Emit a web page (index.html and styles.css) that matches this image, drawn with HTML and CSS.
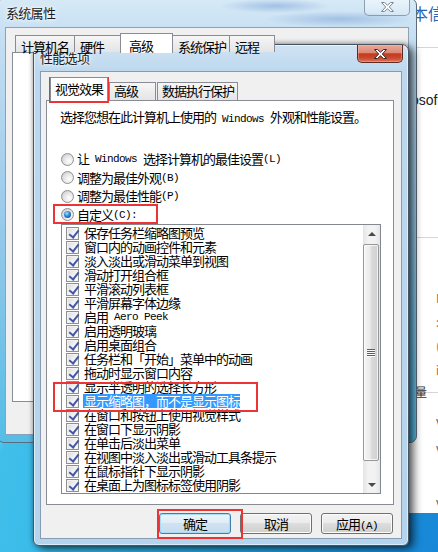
FILE: index.html
```html
<!DOCTYPE html>
<html lang="zh-CN">
<head>
  <meta charset="UTF-8" />
  <meta name="viewport" content="width=device-width, initial-scale=1.0"/>
  <title>性能选项</title>
  <link rel="stylesheet" href="styles.css">
</head>
<body>

<div class="desktop">

  <div class="page">
    <span class="page-head">本信</span>
    <div class="page-rule"></div>
    <span class="page-word">osof</span>
    <div class="page-rule rule-2"></div>
    <span class="page-bits">I<br>:<br>(<br>i</span>
    <div class="page-rule rule-3"><span>量</span></div>
    <span class="page-bits bits-2">v<br>v<br><br>v</span>
  </div>

  <div class="window back">
    <div class="titlebar back-bar">
      <span class="caption">系统属性</span>
      <span class="close close-off">
        <svg width="13" height="10" viewBox="0 0 13 10"><polygon points="0.5,0.5 3.5,0.5 6.5,3.2 9.5,0.5 12.5,0.5 8.3,5 12.5,9.5 9.5,9.5 6.5,6.8 3.5,9.5 0.5,9.5 4.7,5" fill="#fbfbfb" stroke="#7d8895" stroke-width="1"/></svg>
      </span>
    </div>
    <div class="client back-client">
      <div class="back-tabs">
        <span class="btab b1">计算机名</span>
        <span class="btab b2">硬件</span>
        <span class="btab b3 on">高级</span>
        <span class="btab b4">系统保护</span>
        <span class="btab b5">远程</span>
      </div>
      <div class="back-panel"></div>
    </div>
  </div>

  <div class="window dialog">
    <div class="titlebar dialog-bar">
      <span class="caption">性能选项</span>
      <span class="close close-red">
        <svg width="13" height="10" viewBox="0 0 13 10"><polygon points="0.5,0.5 3.5,0.5 6.5,3.2 9.5,0.5 12.5,0.5 8.3,5 12.5,9.5 9.5,9.5 6.5,6.8 3.5,9.5 0.5,9.5 4.7,5" fill="#ffffff" stroke="#3a2a2a" stroke-width="1"/></svg>
      </span>
    </div>

    <div class="client">
      <div class="tabs">
        <span class="tab active">视觉效果</span>
        <span class="tab t2">高级</span>
        <span class="tab t3">数据执行保护</span>
      </div>

      <div class="panel">
        <p class="desc">选择您想在此计算机上使用的<span class="en"> Windows </span>外观和性能设置。</p>

        <div class="options">
          <div class="opt"><span class="radio"></span>让<span class="en"> Windows </span>选择计算机的最佳设置<span class="en">(L)</span></div>
          <div class="opt"><span class="radio"></span>调整为最佳外观<span class="en">(B)</span></div>
          <div class="opt"><span class="radio"></span>调整为最佳性能<span class="en">(P)</span></div>
          <div class="opt"><span class="radio on"></span>自定义<span class="en">(C):</span></div>
        </div>

        <div class="listbox">
          <div class="items">
            <div class="item"><span class="check"></span>保存任务栏缩略图预览</div>
            <div class="item"><span class="check"></span>窗口内的动画控件和元素</div>
            <div class="item"><span class="check"></span>淡入淡出或滑动菜单到视图</div>
            <div class="item"><span class="check"></span>滑动打开组合框</div>
            <div class="item"><span class="check"></span>平滑滚动列表框</div>
            <div class="item"><span class="check"></span>平滑屏幕字体边缘</div>
            <div class="item"><span class="check"></span>启用<span class="en"> Aero Peek</span></div>
            <div class="item"><span class="check"></span>启用透明玻璃</div>
            <div class="item"><span class="check"></span>启用桌面组合</div>
            <div class="item"><span class="check"></span>任务栏和「开始」菜单中的动画</div>
            <div class="item"><span class="check"></span>拖动时显示窗口内容</div>
            <div class="item"><span class="check"></span>显示半透明的选择长方形</div>
            <div class="item"><span class="check"></span><span class="sel">显示缩略图，而不是显示图标</span></div>
            <div class="item"><span class="check"></span>在窗口和按钮上使用视觉样式</div>
            <div class="item"><span class="check"></span>在窗口下显示阴影</div>
            <div class="item"><span class="check"></span>在单击后淡出菜单</div>
            <div class="item"><span class="check"></span>在视图中淡入淡出或滑动工具条提示</div>
            <div class="item"><span class="check"></span>在鼠标指针下显示阴影</div>
            <div class="item"><span class="check"></span>在桌面上为图标标签使用阴影</div>
          </div>
          <div class="scrollbar">
            <div class="sb-btn"><span class="arrow up"></span></div>
            <div class="sb-track">
              <div class="thumb"><span class="grip"></span></div>
            </div>
            <div class="sb-btn"><span class="arrow down"></span></div>
          </div>
        </div>
      </div>

      <div class="buttons">
        <button class="btn default">确定</button>
        <button class="btn">取消</button>
        <button class="btn">应用<span class="en">(A)</span></button>
      </div>
    </div>
  </div>

  <div class="mark mark-tab"></div>
  <div class="mark mark-radio"></div>
  <div class="mark mark-item"></div>
  <div class="mark mark-ok"></div>

</div>

</body>
</html>
```

FILE: styles.css
```css
* {
  box-sizing: border-box;
}

body {
  margin: 0;
  font-family: "Noto Sans CJK SC", "Liberation Sans", sans-serif;
  font-size: 13px;
  letter-spacing: -1px;
  color: #000;
}

.en {
  font-family: "Liberation Mono", "Noto Sans CJK SC", monospace;
  font-size: 11px;
  letter-spacing: -0.6px;
  white-space: pre;
}

.desktop {
  position: relative;
  width: 438px;
  height: 552px;
  overflow: hidden;
  background:
    linear-gradient(118deg, transparent 30%, rgba(255, 255, 255, 0.25) 31%, transparent 33%),
    linear-gradient(125deg, transparent 12%, rgba(255, 255, 255, 0.2) 13%, transparent 15%),
    linear-gradient(100deg, #48c7ec 0%, #2fb0e6 45%, #1787d7 100%);
}

/* page behind, on the right */
.page {
  position: absolute;
  left: 404px;
  top: 0;
  width: 34px;
  height: 513px;
  background: #fff;
  padding-left: 10px;
  display: flex;
  flex-direction: column;
  letter-spacing: 0;
}

.page-head {
  margin-top: 3px;
  margin-left: -2px;
  font-size: 16px;
  line-height: 20px;
  color: #2a63b8;
  white-space: nowrap;
}

.page-rule {
  margin-top: 24px;
  border-top: 1px solid #d6d6d6;
  margin-left: 2px;
}

.page-word {
  margin-top: 44px;
  margin-left: -3px;
  font-family: "Liberation Sans", sans-serif;
  font-size: 14px;
  line-height: 16px;
  color: #222;
  white-space: nowrap;
}

.rule-2 {
  margin-top: 129px;
}

.page-bits {
  margin-top: 48px;
  margin-left: 22px;
  font-size: 12px;
  line-height: 24px;
  color: #b36b1c;
}

.rule-3 {
  margin-top: 10px;
  position: relative;
}

.rule-3 span {
  position: absolute;
  left: -1px;
  top: -8px;
  font-size: 12px;
  line-height: 14px;
  color: #333;
}

.bits-2 {
  margin-top: 14px;
  color: #555;
  line-height: 27px;
}

/* windows */
.window {
  position: absolute;
  display: flex;
  flex-direction: column;
}

.titlebar {
  display: flex;
  justify-content: space-between;
  align-items: center;
  flex-shrink: 0;
}

.caption {
  font-size: 13px;
  letter-spacing: -0.7px;
  color: #1b1b1b;
  text-shadow: 0 0 6px #fff, 0 0 3px #fff;
  line-height: 16px;
}

.close {
  align-self: flex-start;
  display: flex;
  align-items: center;
  justify-content: center;
  border-radius: 0 0 5px 5px;
}

.client {
  flex: 1;
  background: #f0f0f0;
  display: flex;
  flex-direction: column;
}

/* back window: 系统属性 */
.back {
  left: -3px;
  top: -2px;
  width: 420px;
  height: 445px;
  border: 1px solid #5d6c7b;
  border-radius: 7px;
  padding: 0 7px 7px 7px;
  background: linear-gradient(#d6e9f6, #c4def2 40px, #93c8ea 240px, #55bde7);
}

.back-bar {
  height: 28px;
  padding-left: 1px;
  margin-right: -1px;
  background:
    radial-gradient(ellipse 55px 7px at 270px 7px, rgba(70, 120, 200, 0.35), transparent),
    radial-gradient(ellipse 75px 8px at 335px 20px, rgba(60, 110, 190, 0.3), transparent);
}

.close-off {
  width: 46px;
  height: 17px;
  border: 1px solid rgba(70, 90, 115, 0.55);
  border-top: none;
  background: linear-gradient(rgba(255, 255, 255, 0.5), rgba(255, 255, 255, 0.15));
}

.back-client {
  border: 1px solid #8ea2b5;
  padding: 5px 6px 0 6px;
}

.back-tabs {
  display: flex;
  align-items: flex-end;
  height: 19px;
  padding-left: 3px;
  position: relative;
  z-index: 1;
}

.btab {
  height: 17px;
  border: 1px solid #898c95;
  border-bottom: none;
  background: linear-gradient(#f6f6f6, #e4e4e4);
  padding: 3px 0 0 5px;
  line-height: 15px;
  margin-right: -1px;
}

.btab.on {
  height: 20px;
  background: #fff;
  margin-bottom: -1px;
  padding: 4px 0 0 8px;
}

.b1 { width: 60px; }
.b2 { width: 47px; }
.b3 { width: 53px; }
.b4 { width: 58px; }
.b5 { width: 46px; }

.back-panel {
  height: 350px;
  background: #fff;
  border: 1px solid #898c95;
}

/* front dialog: 性能选项 */
.dialog {
  left: 33px;
  top: 44px;
  width: 376px;
  height: 502px;
  border: 1px solid #475563;
  border-radius: 7px 7px 6px 6px;
  padding: 0 6px 6px;
  background: linear-gradient(#d0e3f3, #bdd8ee 26px, #b4d3ec);
  box-shadow: inset 0 0 0 1px rgba(255, 255, 255, 0.55), 5px 3px 8px rgba(0, 0, 0, 0.6), 0 0 5px rgba(0, 0, 0, 0.35);
}

.dialog-bar {
  height: 26px;
}

.close-red {
  width: 46px;
  height: 18px;
  margin-right: -1px;
  border: 1px solid #5e2a22;
  border-top: none;
  background: linear-gradient(#eaa89a, #dc8a78 45%, #c3391f 52%, #c8472d 75%, #de785d);
  box-shadow: inset 0 0 0 1px rgba(255, 200, 190, 0.35);
}

.dialog .client {
  border: 1px solid #879cb2;
  padding: 5px 7px 0 5px;
}

.tabs {
  display: flex;
  align-items: flex-end;
  height: 23px;
  padding-left: 4px;
  position: relative;
  z-index: 1;
}

.tab {
  height: 18px;
  border: 1px solid #898c95;
  border-bottom: none;
  background: linear-gradient(#f6f6f6, #e5e5e5);
  padding-left: 4px;
  line-height: 16px;
  margin-left: 1px;
}

.tab.active {
  height: 24px;
  width: 58px;
  margin-left: 0;
  margin-bottom: -1px;
  background: #fff;
  line-height: 22px;
}

.t2 { width: 47px; }
.t3 { width: 81px; }

.panel {
  height: 405px;
  background: #fff;
  border: 1px solid #898c95;
  padding: 9px 0 0 13px;
}

.desc {
  margin: 0;
  line-height: 14px;
}

.options {
  margin-top: 24px;
}

.opt {
  height: 18.5px;
  display: flex;
  align-items: center;
  margin-left: 1px;
  line-height: 14px;
}

.radio {
  width: 13px;
  height: 13px;
  border-radius: 50%;
  border: 1px solid #8e8f8f;
  background: radial-gradient(circle at 65% 65%, #ffffff, #e8e8e8 45%, #c9c9c9 90%);
  margin-right: 3px;
  display: flex;
  align-items: center;
  justify-content: center;
  flex-shrink: 0;
}

.radio.on::after {
  content: "";
  width: 7px;
  height: 7px;
  border-radius: 50%;
  background: radial-gradient(circle at 40% 35%, #a6dcff, #2a86d6 45%, #0c3f7a 95%);
}

.listbox {
  margin-left: 1px;
  width: 320px;
  height: 270px;
  border: 1px solid #828790;
  display: flex;
}

.items {
  flex: 1;
  padding: 1px 0 0 4px;
}

.item {
  height: 14px;
  display: flex;
  align-items: center;
  line-height: 14px;
  white-space: nowrap;
}

.check {
  position: relative;
  width: 13px;
  height: 13px;
  border: 1px solid #8e8f8f;
  background: linear-gradient(135deg, #d9d9d9, #f6f6f6 60%, #ffffff);
  box-shadow: inset 0 0 0 1px #f2f2f2;
  margin-right: 5px;
  flex-shrink: 0;
}

.check::after {
  content: "";
  position: absolute;
  left: 3.5px;
  top: 0.5px;
  width: 4px;
  height: 8px;
  border: solid #4456a6;
  border-width: 0 2px 2px 0;
  transform: rotate(38deg);
}

.sel {
  background: #3399ff;
  color: #fff;
  margin-left: -1px;
  padding-left: 1px;
}

.scrollbar {
  width: 17px;
  display: flex;
  flex-direction: column;
  background: linear-gradient(to right, #e4e4e4, #f2f2f2 30%, #f2f2f2 70%, #e6e6e6);
}

.sb-btn {
  height: 17px;
  display: flex;
  align-items: center;
  justify-content: center;
}

.arrow {
  width: 0;
  height: 0;
  border-left: 4px solid transparent;
  border-right: 4px solid transparent;
}

.arrow.up {
  border-bottom: 4px solid #4a4a4a;
}

.arrow.down {
  border-top: 4px solid #4a4a4a;
}

.sb-track {
  flex: 1;
  padding: 2px 1px 0 0;
}

.thumb {
  height: 217px;
  border: 1px solid #979797;
  border-radius: 2px;
  background: linear-gradient(to right, #f6f6f6, #e9e9e9 45%, #dadada 55%, #d0d0d0);
  box-shadow: inset 0 0 0 1px rgba(255, 255, 255, 0.7);
  display: flex;
  align-items: center;
  justify-content: center;
}

.grip {
  width: 8px;
  height: 8px;
  background: repeating-linear-gradient(#5f5f5f 0 1px, #fbfbfb 1px 2px);
}

.buttons {
  display: flex;
  justify-content: flex-end;
  gap: 9px;
  margin-top: 8px;
  margin-right: 1px;
}

.btn {
  width: 72px;
  height: 21px;
  padding: 0;
  border: 1px solid #707070;
  border-radius: 3px;
  background: linear-gradient(#f2f2f2, #ebebeb 50%, #dddddd 50%, #cfcfcf);
  box-shadow: inset 0 0 0 1px #fcfcfc;
  font-family: "Noto Sans CJK SC", "Liberation Sans", sans-serif;
  font-size: 13px;
  letter-spacing: -1px;
  line-height: 19px;
  color: #000;
}

.btn.default {
  border-color: #3c7fb1;
  background: linear-gradient(#eaf4fb, #dfecf6 50%, #cfe2f1 50%, #c6dcee);
  box-shadow: inset 0 0 0 1px #a8dcf5;
}

/* red annotation boxes */
.mark {
  position: absolute;
  border: 2px solid #ec3336;
}

.mark-tab {
  left: 49px;
  top: 77px;
  width: 60px;
  height: 26px;
}

.mark-radio {
  left: 53px;
  top: 204px;
  width: 105px;
  height: 20px;
}

.mark-item {
  left: 53px;
  top: 382px;
  width: 205px;
  height: 30px;
}

.mark-ok {
  left: 157px;
  top: 509px;
  width: 86px;
  height: 30px;
}
```
